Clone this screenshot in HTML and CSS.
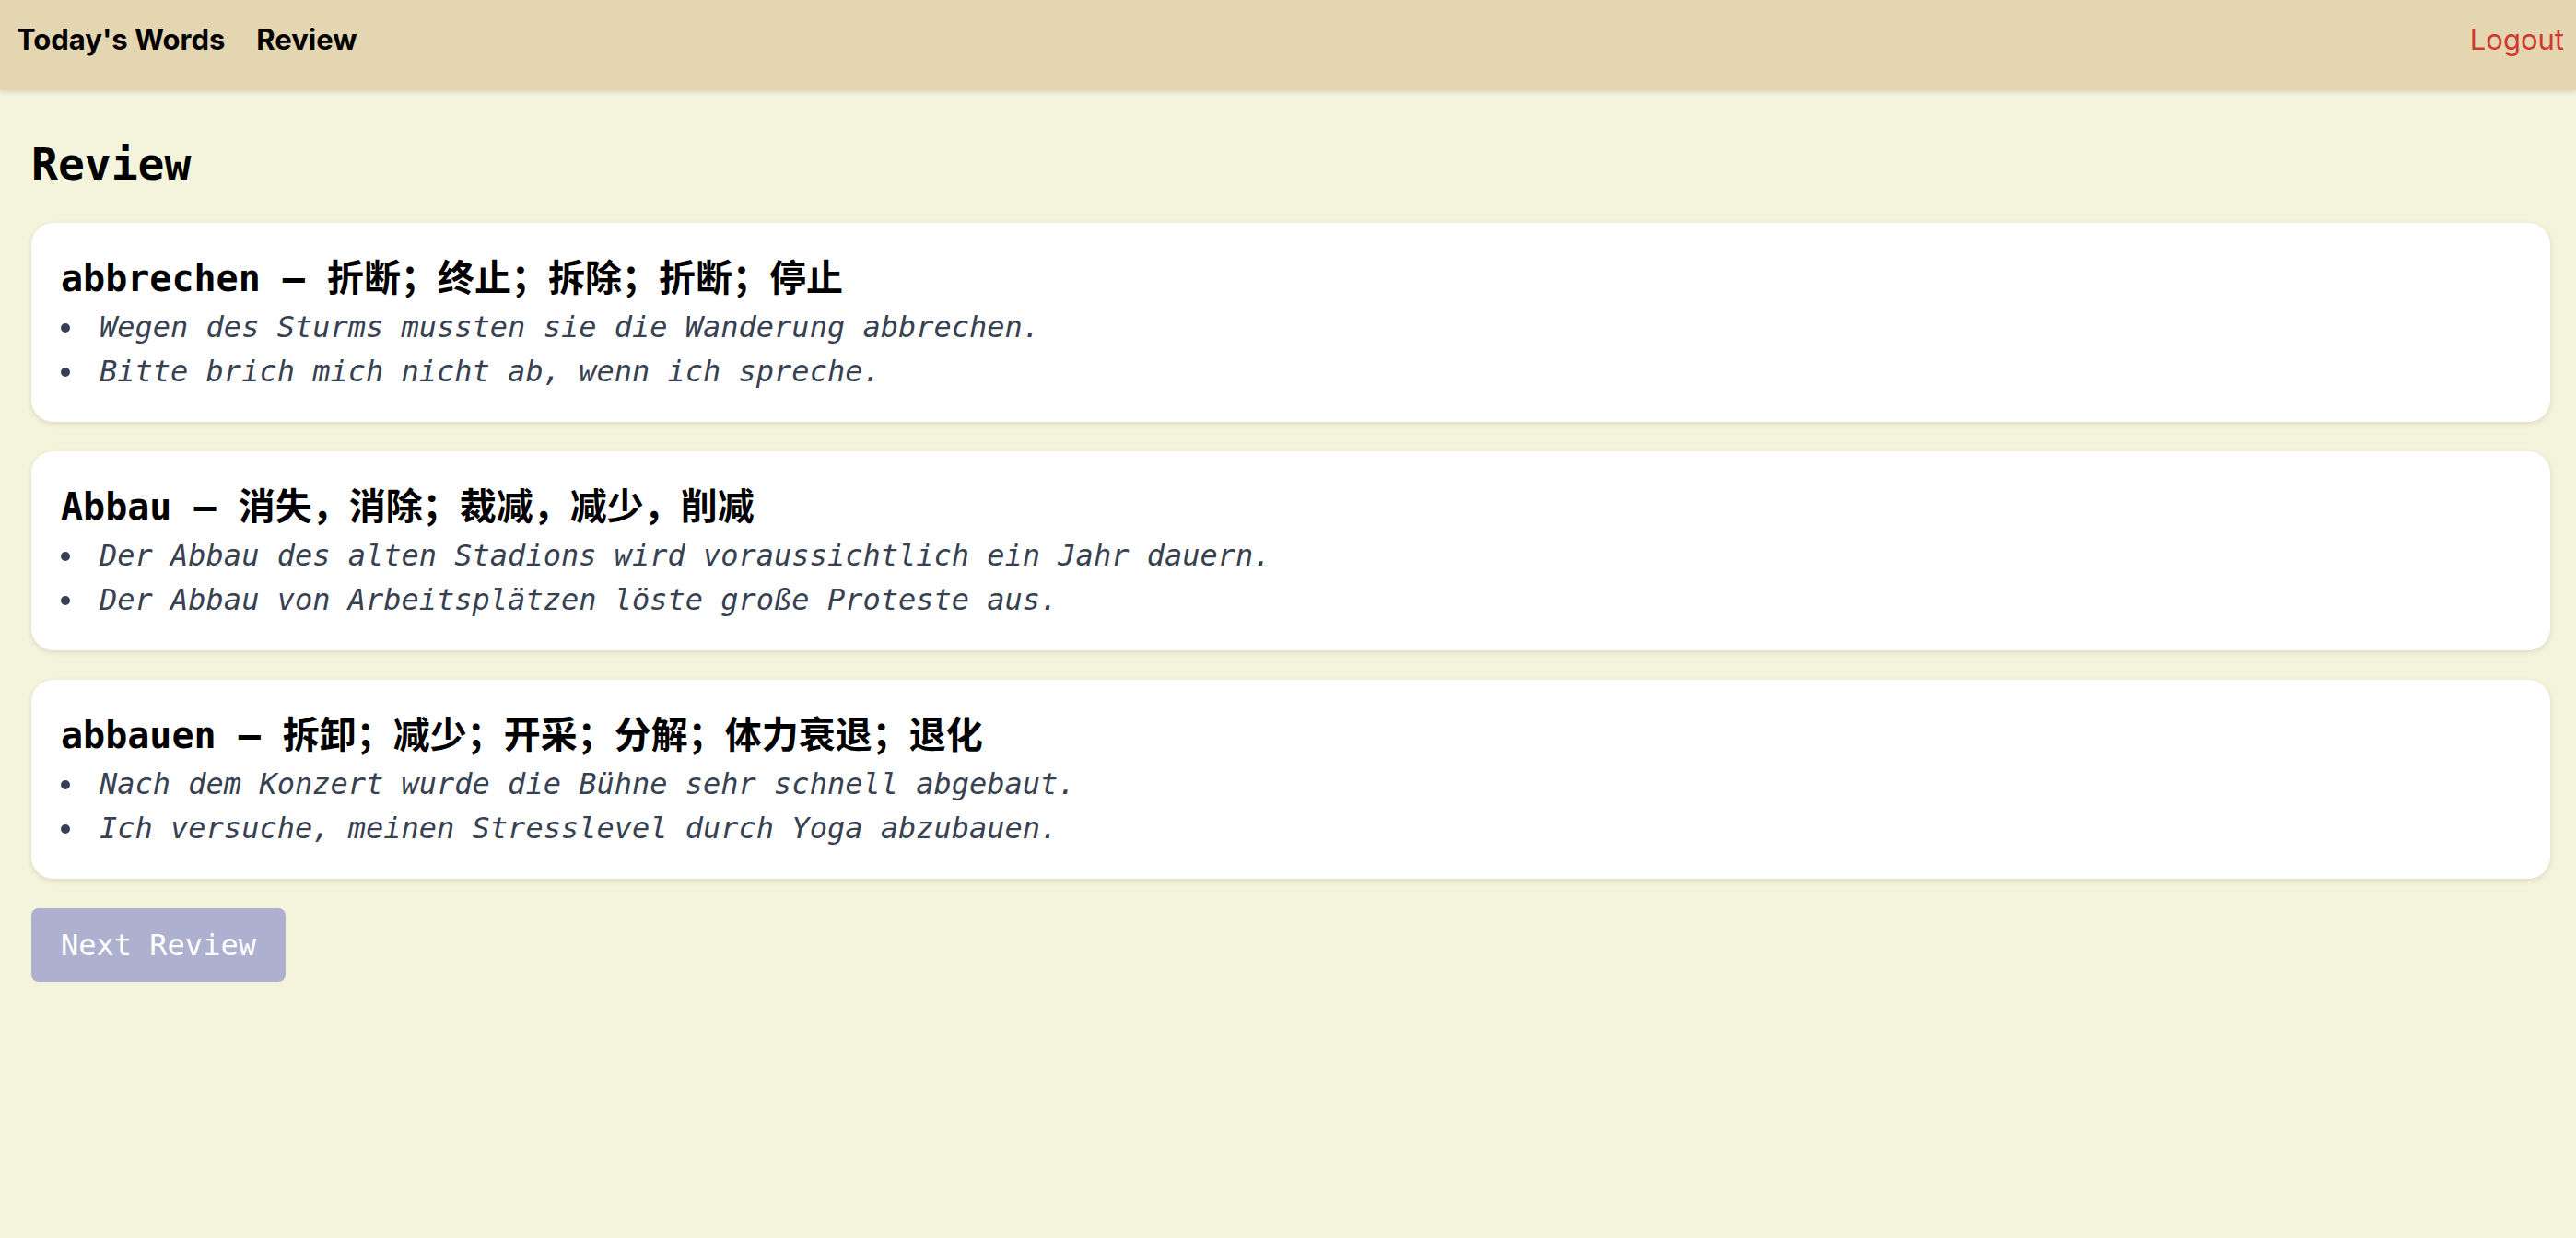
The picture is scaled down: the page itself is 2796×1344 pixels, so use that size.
FILE: index.html
```html
<!DOCTYPE html>
<html lang="de">
<head>
<meta charset="utf-8">
<title>Review</title>
<link rel="stylesheet" href="styles.css">
</head>
<body>
<header class="topbar">
  <nav class="nav">
    <a class="nav-link" href="#">Today's Words</a>
    <a class="nav-link" href="#">Review</a>
  </nav>
  <a class="logout" href="#">Logout</a>
</header>
<main class="main">
  <h1 class="page-title">Review</h1>
  <section class="cards">
    <article class="card">
      <h2 class="word">abbrechen – <span class="zh">折断；终止；拆除；折断；停止</span></h2>
      <ul class="examples">
        <li>Wegen des Sturms mussten sie die Wanderung abbrechen.</li>
        <li>Bitte brich mich nicht ab, wenn ich spreche.</li>
      </ul>
    </article>
    <article class="card">
      <h2 class="word">Abbau – <span class="zh">消失，消除；裁减，减少，削减</span></h2>
      <ul class="examples">
        <li>Der Abbau des alten Stadions wird voraussichtlich ein Jahr dauern.</li>
        <li>Der Abbau von Arbeitsplätzen löste große Proteste aus.</li>
      </ul>
    </article>
    <article class="card">
      <h2 class="word">abbauen – <span class="zh">拆卸；减少；开采；分解；体力衰退；退化</span></h2>
      <ul class="examples">
        <li>Nach dem Konzert wurde die Bühne sehr schnell abgebaut.</li>
        <li>Ich versuche, meinen Stresslevel durch Yoga abzubauen.</li>
      </ul>
    </article>
  </section>
  <button class="next-btn" type="button">Next Review</button>
</main>
</body>
</html>
```
FILE: styles.css
```css
html, body {
  margin: 0;
  padding: 0;
}
body {
  background: #f4f4dc;
  font-family: "DejaVu Sans Mono", "Noto Sans CJK SC", monospace;
  color: #000;
  min-height: 1344px;
}
a {
  text-decoration: none;
}
.topbar {
  box-sizing: border-box;
  height: 98px;
  background: #e3d6b0;
  display: flex;
  justify-content: space-between;
  align-items: flex-start;
  padding: 20px 13px 0 18px;
  box-shadow: 0 2px 5px rgba(0, 0, 0, 0.12);
  position: relative;
  font-family: Inter, "Noto Sans", sans-serif;
  font-size: 31px;
  line-height: 46px;
}
.nav {
  display: flex;
  gap: 34px;
}
.nav-link {
  color: #000;
  font-weight: 700;
}
.logout {
  color: #cf3a31;
  font-weight: 400;
}
.main {
  padding: 0 28px 40px 34px;
}
.page-title {
  margin: 52px 0 36px;
  font-size: 48px;
  line-height: 56px;
  font-weight: 700;
}
.cards {
  display: flex;
  flex-direction: column;
  gap: 32px;
}
.card {
  background: #fff;
  border-radius: 24px;
  padding: 31px 32px;
  box-shadow: 0 2px 6px rgba(0, 0, 0, 0.1);
}
.word {
  margin: 0;
  font-size: 40px;
  line-height: 58px;
  font-weight: 700;
}
.zh {
  font-family: "Noto Sans CJK SC", sans-serif;
  line-height: 1;
}
.examples {
  list-style: none;
  margin: 0;
  padding: 0;
}
.examples li {
  display: flex;
  align-items: center;
  font-size: 32px;
  line-height: 48px;
  font-style: italic;
  color: #374151;
}
.examples li::before {
  content: "";
  flex: none;
  width: 10px;
  height: 10px;
  border-radius: 50%;
  background: #374151;
  margin: 2px 32px 0 0;
}
.next-btn {
  margin-top: 32px;
  background: #aeb0cf;
  color: #fff;
  border: 0;
  border-radius: 8px;
  font-family: "DejaVu Sans Mono", monospace;
  font-size: 32px;
  line-height: 40px;
  padding: 20px 32px;
}
```
